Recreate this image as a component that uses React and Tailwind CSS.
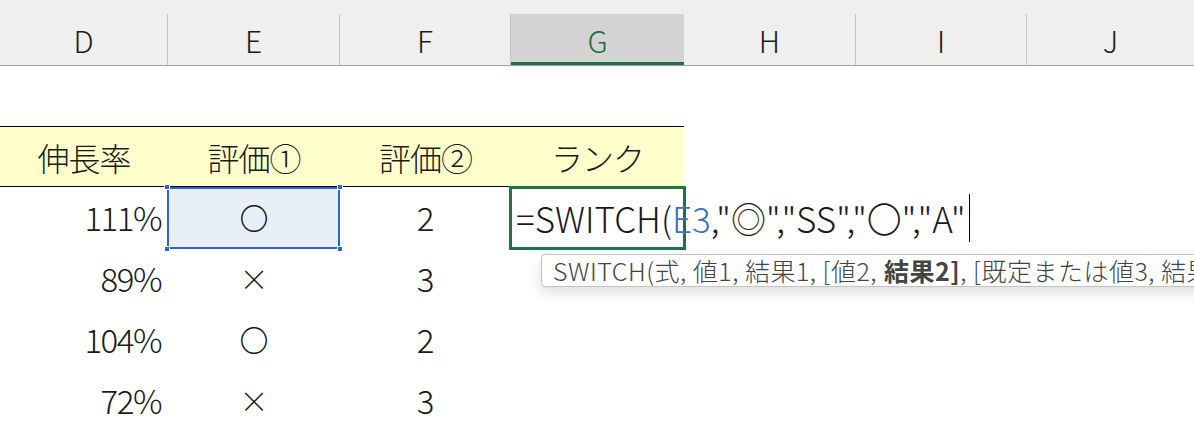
import React from 'react';

// Excel-style sheet: SWITCH formula being typed in G3
const GRID = 'grid grid-cols-[168px_172px_171px_173px_172px_171px_1fr]';
const LETTERS = ['D', 'E', 'F', 'G', 'H', 'I', 'J'];

const ROWS = [
  ['111%', '〇', '2'],
  ['89%', '×', '3'],
  ['104%', '〇', '2'],
  ['72%', '×', '3'],
];

const Handle = ({ className }) => (
  <span className={`absolute w-[6px] h-[6px] bg-[#2f66c8] border border-white ${className}`} />
);

const App = () => {
  return (
    <div className="relative w-[1194px] h-[428px] overflow-hidden bg-white text-[#1a1a1a] font-light font-['Noto_Sans_CJK_JP','Noto_Sans',sans-serif]">
      {/* column headers */}
      <div className="h-[14px] bg-[#efefef]" />
      <div className={`${GRID} h-[52px] bg-[#efefef] border-b border-[#9f9f9f]`}>
        {LETTERS.map((l, i) => (
          <div
            key={l}
            className={
              l === 'G'
                ? 'flex items-center justify-center bg-[#d3d3d3] border-b-[3px] border-[#217346] text-[#1d6b45] text-[30px] leading-none pt-[3px]'
                : `flex items-center justify-center text-[30px] leading-none ${i < 6 ? 'border-r border-[#c4c4c4]' : ''}`
            }
          >
            {l}
          </div>
        ))}
      </div>

      <div className="h-[60px]" />

      {/* header row */}
      <div className={`${GRID} h-[61px]`}>
        {['伸長率', '評価①', '評価②', 'ランク'].map((t) => (
          <div
            key={t}
            className="flex items-center justify-center bg-[#ffffcc] border-y border-black text-[32px] tracking-[-1px] leading-none"
          >
            {t}
          </div>
        ))}
      </div>

      {/* data rows */}
      {ROWS.map((r, idx) => (
        <div key={idx} className={`${GRID} h-[61px]`}>
          <div className="flex items-center justify-end pr-[7px] text-[33px] tracking-[-1.5px] leading-none">{r[0]}</div>
          <div className={`relative flex items-center justify-center text-[29px] leading-none ${idx === 0 ? 'bg-[#e9eff8]' : ''}`}>
            {r[1]}
            {idx === 0 && (
              <>
                <div className="absolute -left-[1px] top-0 right-0 -bottom-[1px] border-2 border-[#2f66c8]" />
                <Handle className="-left-[4px] -top-[3px]" />
                <Handle className="-right-[3px] -top-[3px]" />
                <Handle className="-left-[4px] -bottom-[4px]" />
                <Handle className="-right-[3px] -bottom-[4px]" />
              </>
            )}
          </div>
          <div className="flex items-center justify-center text-[33px] leading-none">{r[2]}</div>
          <div className="relative flex items-center">
            {idx === 0 && (
              <>
                <div className="absolute -left-[2px] -top-[1px] -right-[2px] -bottom-[2px] border-[3px] border-[#217346]" />
                <div className="relative z-10 pl-[5px] whitespace-nowrap text-[35px] leading-none flex items-center">
                  <span>=SWITCH(</span>
                  <span className="text-[#3a72c4]">E3</span>
                  <span>,"◎","SS","〇","A"</span>
                  <span className="ml-[3px] w-px h-[48px] bg-black" />
                </div>
              </>
            )}
          </div>
          <div />
          <div />
          <div />
        </div>
      ))}

      {/* function argument tooltip */}
      <div className="absolute left-[541px] top-[254px] h-[33px] pl-[11px] pr-4 flex items-center whitespace-nowrap bg-white border border-[#c4c4c4] rounded-[4px] shadow-[0_6px_14px_rgba(0,0,0,0.13)] text-[25px] tracking-[0.5px] leading-none text-[#444444]">
        SWITCH(式, 値1, 結果1, [値2, <b className="font-bold ml-[7px]">結果2]</b>, [既定または値3, 結果3]...)
      </div>
    </div>
  );
};

export default App;
